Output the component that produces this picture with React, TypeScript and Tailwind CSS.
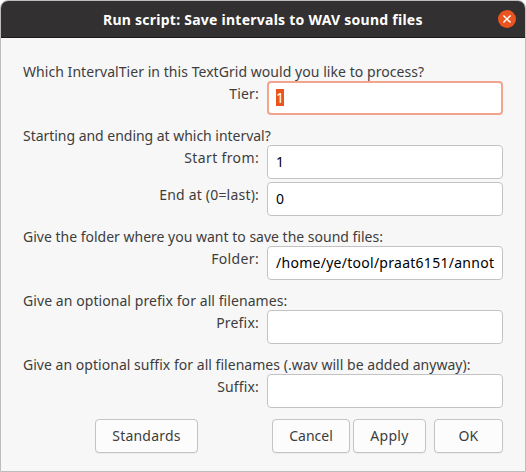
type Field = { label: string; value: string; focused?: boolean; labelClass: string; valueClass?: string };
type Group = { heading: string; headingClass: string; fields: Field[] };

const groups: Group[] = [
  {
    heading: "Which IntervalTier in this TextGrid would you like to process?",
    headingClass: "tracking-[0.05px]",
    fields: [{ label: "Tier:", value: "1", focused: true, labelClass: "tracking-[0.2px]" }],
  },
  {
    heading: "Starting and ending at which interval?",
    headingClass: "tracking-[-0.03px]",
    fields: [
      { label: "Start from:", value: "1", labelClass: "tracking-[0.36px]" },
      { label: "End at (0=last):", value: "0", labelClass: "tracking-[0.2px]" },
    ],
  },
  {
    heading: "Give the folder where you want to save the sound files:",
    headingClass: "tracking-[0px]",
    fields: [
      {
        label: "Folder:",
        value: "/home/ye/tool/praat6151/annot",
        labelClass: "tracking-[0.35px]",
        valueClass: "tracking-[0.27px]",
      },
    ],
  },
  {
    heading: "Give an optional prefix for all filenames:",
    headingClass: "tracking-[0.07px]",
    fields: [{ label: "Prefix:", value: "", labelClass: "tracking-[0.2px]" }],
  },
  {
    heading: "Give an optional suffix for all filenames (.wav will be added anyway):",
    headingClass: "tracking-[0.03px]",
    fields: [{ label: "Suffix:", value: "", labelClass: "tracking-[0.15px]" }],
  },
];

function FieldRow({ field }: { field: Field }) {
  return (
    <div className="flex h-[34px]">
      <div className={`w-[236px] pt-[3px] text-right leading-5 ${field.labelClass}`}>{field.label}</div>
      <div
        className={`ml-2 flex h-[34px] w-[236px] items-center overflow-hidden rounded-[4px] bg-white text-black ${
          field.focused ? "border-2 border-[#f3a58c] pl-[7px]" : "border border-[#c3c3c3] pl-2"
        }`}
      >
        <span
          className={
            field.focused ? "mb-px block h-[17px] bg-[#e95420] leading-[18px] text-white" : `leading-5 ${field.valueClass ?? ""}`
          }
        >
          {field.value}
        </span>
      </div>
    </div>
  );
}

function Button({ children, className }: { children: string; className: string }) {
  return (
    <button
      className={`h-[34px] rounded-[4px] border border-[#c4c4c4] bg-[#fcfcfc] text-center leading-5 shadow-[0_1px_1px_rgba(0,0,0,0.05)] ${className}`}
    >
      {children}
    </button>
  );
}

export default function App() {
  return (
    <div className="h-[472px] w-[526px] bg-white font-['Noto_Sans',sans-serif] text-[14px] whitespace-nowrap text-[#3d3d3d]">
      <div className="flex h-full w-full flex-col overflow-hidden rounded-t-[8px] border border-[#bdbdbd] bg-[#f7f7f7]">
        <header className="flex h-[37px] shrink-0 items-center border-b border-[#1c1c1c] bg-[#323030] text-white">
          <h1 className="ml-[102px] w-[391px] pt-[2px] text-[14px] leading-5 font-bold tracking-[0.25px]">
            Run script: Save intervals to WAV sound files
          </h1>
          <button aria-label="Close" className="ml-[4px] flex size-[18px] items-center justify-center rounded-full bg-[#e95420]">
            <svg viewBox="0 0 18 18" className="size-[18px]" fill="none" stroke="white" strokeWidth="1.4">
              <path d="M5.4 5.4 12.6 12.6M12.6 5.4 5.4 12.6" />
            </svg>
          </button>
        </header>
        <main className="flex flex-col gap-[11px] pt-6 pl-[22px]">
          {groups.map((g) => (
            <section key={g.heading}>
              <div className={`h-[19px] leading-5 ${g.headingClass}`}>{g.heading}</div>
              <div className="flex flex-col gap-[3px]">
                {g.fields.map((f) => (
                  <FieldRow key={f.label} field={f} />
                ))}
              </div>
            </section>
          ))}
        </main>
        <footer className="mt-[11px] flex pl-[94px]">
          <Button className="w-[103px] tracking-[0.2px]">Standards</Button>
          <Button className="ml-[74px] w-[78px]">Cancel</Button>
          <Button className="ml-[3px] w-[73px] tracking-[0.3px]">Apply</Button>
          <Button className="ml-2 w-[69px] tracking-[0.3px]">OK</Button>
        </footer>
      </div>
    </div>
  );
}
